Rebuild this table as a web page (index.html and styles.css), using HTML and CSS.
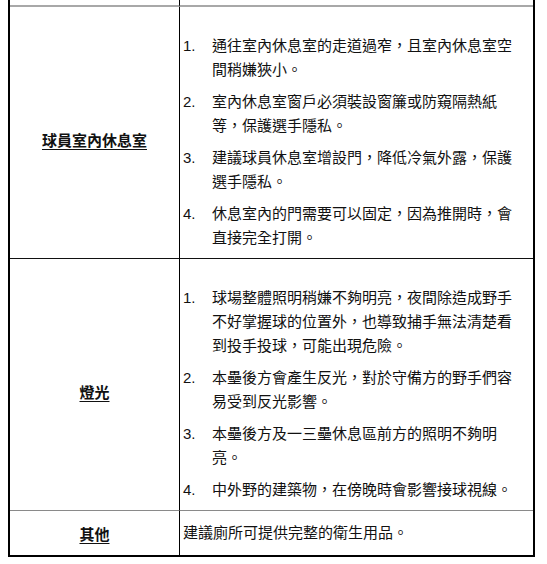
FILE: index.html
```html
<!DOCTYPE html>
<html lang="zh-Hant">
<head>
<meta charset="utf-8">
<link rel="stylesheet" href="styles.css">
</head>
<body>
<table class="sheet">
  <tr class="cut">
    <td class="c1"></td>
    <td class="c2"></td>
  </tr>
  <tr class="row row-a">
    <td class="c1 label"><span>球員室內休息室</span></td>
    <td class="c2 content">
      <div class="item"><span class="num">1.</span><span class="txt">通往室內休息室的走道過窄，且室內休息室空間稍嫌狹小。</span></div>
      <div class="item"><span class="num">2.</span><span class="txt">室內休息室窗戶必須裝設窗簾或防窺隔熱紙等，保護選手隱私。</span></div>
      <div class="item"><span class="num">3.</span><span class="txt">建議球員休息室增設門，降低冷氣外露，保護選手隱私。</span></div>
      <div class="item"><span class="num">4.</span><span class="txt">休息室內的門需要可以固定，因為推開時，會直接完全打開。</span></div>
    </td>
  </tr>
  <tr class="row row-b">
    <td class="c1 label"><span>燈光</span></td>
    <td class="c2 content">
      <div class="item"><span class="num">1.</span><span class="txt">球場整體照明稍嫌不夠明亮，夜間除造成野手不好掌握球的位置外，也導致捕手無法清楚看到投手投球，可能出現危險。</span></div>
      <div class="item"><span class="num">2.</span><span class="txt">本壘後方會產生反光，對於守備方的野手們容易受到反光影響。</span></div>
      <div class="item"><span class="num">3.</span><span class="txt">本壘後方及一三壘休息區前方的照明不夠明亮。</span></div>
      <div class="item"><span class="num">4.</span><span class="txt">中外野的建築物，在傍晚時會影響接球視線。</span></div>
    </td>
  </tr>
  <tr class="row row-c">
    <td class="c1 label short"><span>其他</span></td>
    <td class="c2 plain">建議廁所可提供完整的衛生用品。</td>
  </tr>
</table>
</body>
</html>
```

FILE: styles.css
```css
html, body {
  margin: 0;
  padding: 0;
  background: #ffffff;
}

body {
  font-family: "Liberation Sans", "Noto Sans CJK TC", sans-serif;
  font-size: 15px;
  color: #111;
}

.sheet {
  margin-left: 8px;
  width: 527px;
  border-collapse: separate;
  border-spacing: 0;
  border-left: 2px solid #000;
  border-right: 2px solid #000;
  border-bottom: 2px solid #000;
  table-layout: fixed;
}

.sheet td {
  padding: 0;
  vertical-align: top;
}

.c1 {
  width: 169px;
  border-right: 1px solid #000;
}

.cut td {
  height: 5px;
  border-bottom: 2px solid #a8a8a8;
}

.row-a td {
  border-bottom: 1px solid #111;
}

.row-b td {
  border-bottom: 1px solid #8a8a8a;
}

.label {
  text-align: center;
  vertical-align: middle !important;
  font-weight: bold;
  padding-top: 14px !important;
}

.label.short {
  padding-top: 0 !important;
}

.label span {
  text-decoration: underline;
  text-decoration-thickness: 1px;
  text-underline-offset: 3px;
  font-size: 15px;
}

.content {
  padding: 27px 0 8px 3px !important;
  line-height: 24px;
}

.item {
  display: flex;
}

.item + .item {
  margin-top: 8px;
}

.num {
  flex: 0 0 29px;
}

.txt {
  width: 306px;
}

.plain {
  padding: 10px 0 10px 3px !important;
  line-height: 24px;
  vertical-align: middle !important;
}
```
